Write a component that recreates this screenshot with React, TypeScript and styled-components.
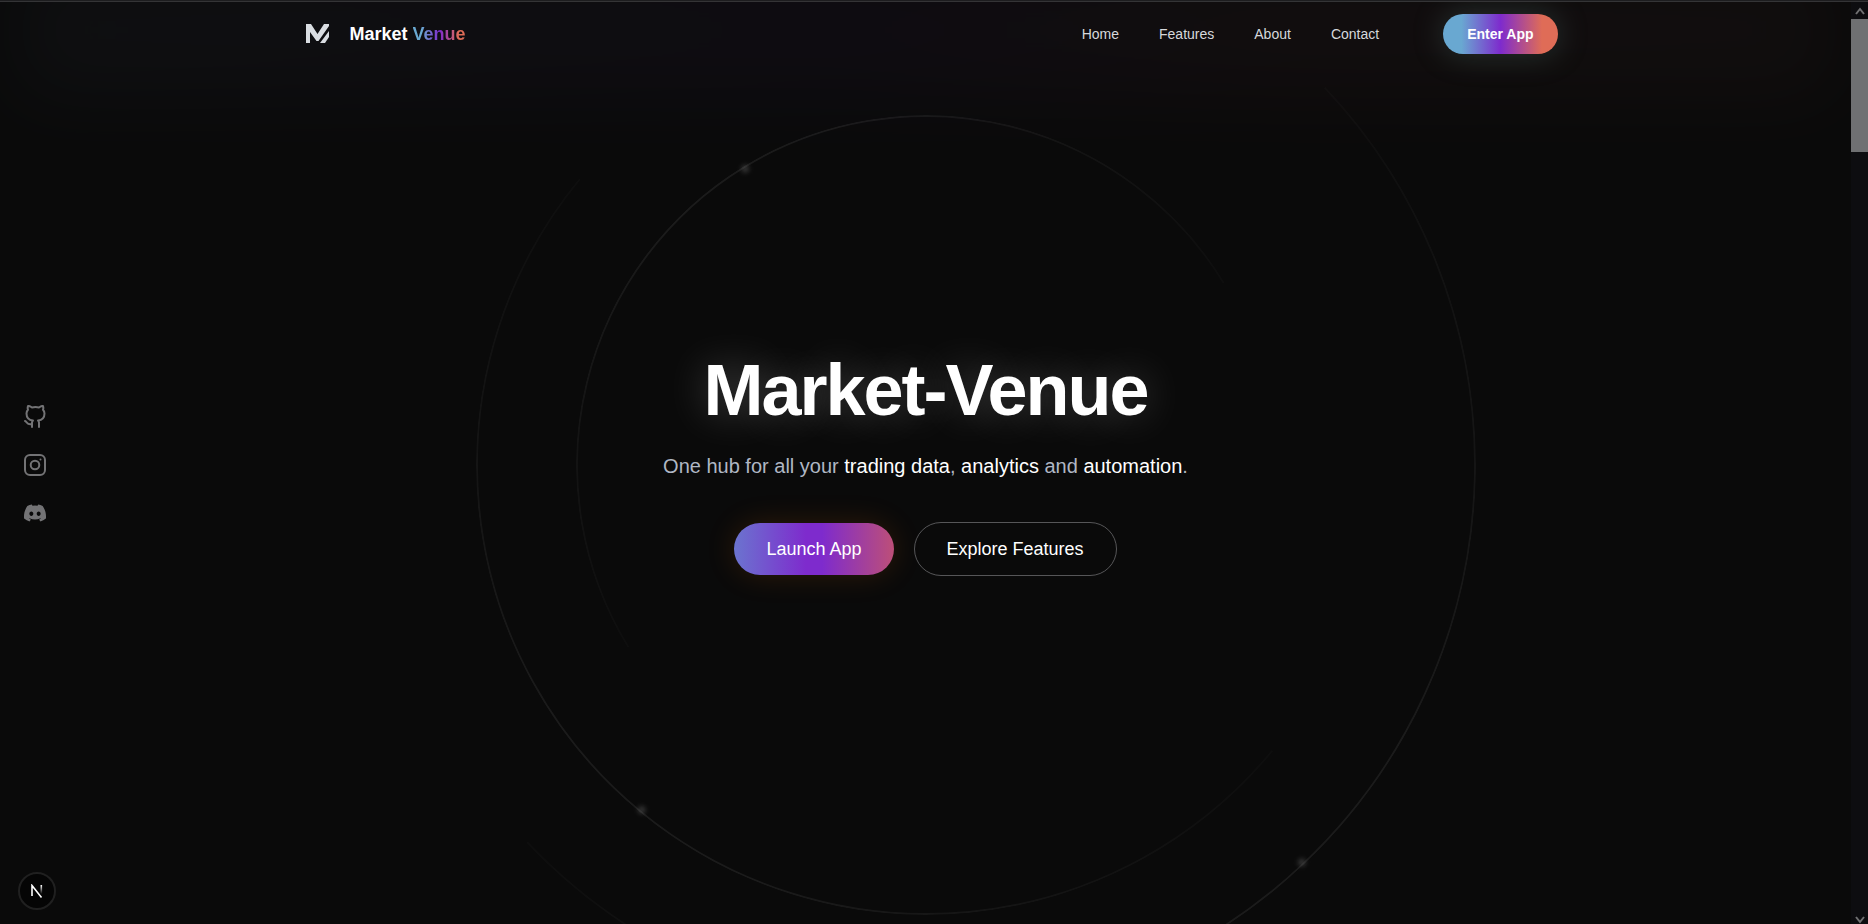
import React from 'react';
import styled, { createGlobalStyle } from 'styled-components';
import { FiGithub } from 'react-icons/fi';
import { FaDiscord } from 'react-icons/fa';

const brandGradient = 'linear-gradient(to right, #69a8d1 16%, #7e2bcd 50%, #df6c57 86%)';

const GlobalStyle = createGlobalStyle`
  * { box-sizing: border-box; }
  html { height: 100%; }
  body {
    margin: 0;
    min-height: 100%;
    background: #0a0a0a;
    color: #fff;
    font-family: "Liberation Sans", Arial, sans-serif;
    overflow: hidden;
  }
  a { color: inherit; text-decoration: none; }
  button { font-family: inherit; cursor: pointer; }
`;

const Page = styled.div`
  display: flex;
  height: 100vh;
  padding-top: 2px;
  background: linear-gradient(#1d1d1f 1px, #343436 1px 2px, #0a0a0a 2px);
`;

const Content = styled.div`
  position: relative;
  flex: 1;
  display: flex;
  flex-direction: column;
  overflow: hidden;
`;

const HeaderGlow = styled.div`
  position: absolute;
  inset: -40px 16px auto;
  height: 136px;
  background: linear-gradient(to right, #8090b8, #7e4bcd 45%, #c86478 70%, #b87070);
  filter: blur(40px);
  opacity: 0.04;
`;

const Header = styled.header`
  position: relative;
  z-index: 2;
  display: flex;
  align-items: center;
  justify-content: space-between;
  width: 100%;
  max-width: 1280px;
  height: 64px;
  margin: 0 auto;
  padding: 0 8px;
`;

const Brand = styled.a`
  display: flex;
  align-items: center;
  gap: 8px;
  font-size: 18px;
  line-height: 28px;
  font-weight: 700;
`;

const BrandAccent = styled.span`
  background: ${brandGradient};
  background-clip: text;
  -webkit-background-clip: text;
  color: transparent;
`;

const Nav = styled.nav`
  display: flex;
  align-items: center;
  gap: 40px;
  font-size: 14px;
  line-height: 20px;
  color: #d6d8dc;
`;

const EnterButton = styled.button`
  height: 40px;
  margin-left: 24px;
  padding: 0 24px;
  border: 0;
  border-radius: 20px;
  background: ${brandGradient};
  box-shadow: 0 0 32px #78aaa040;
  color: #fff;
  font-size: 14px;
  font-weight: 700;
`;

const Hero = styled.main`
  position: absolute;
  inset: 0 0 -4px;
  display: flex;
  flex-direction: column;
  align-items: center;
  justify-content: center;
  text-align: center;
`;

const Ring = styled.div<{ $radius: number; $turn: number }>`
  position: absolute;
  top: 50%;
  left: 50%;
  width: ${p => p.$radius * 2}px;
  height: ${p => p.$radius * 2}px;
  margin: -${p => p.$radius}px 0 0 -${p => p.$radius}px;
  transform: rotate(${p => p.$turn}deg);

  &::before {
    content: "";
    position: absolute;
    inset: 0;
    border: 2px solid #ffffff12;
    border-radius: 50%;
    mask-image: conic-gradient(from -90deg, #0004, #000 75deg 105deg, #0004 180deg, transparent 180deg);
  }

  &::after {
    content: "";
    position: absolute;
    top: -1px;
    left: calc(50% - 4px);
    width: 8px;
    height: 8px;
    border-radius: 50%;
    background: #ffffff28;
    filter: blur(2px);
  }
`;

const Title = styled.h1`
  position: relative;
  margin: 0;
  font-size: 72px;
  line-height: 72px;
  font-weight: 700;
  letter-spacing: -2px;
  text-shadow: 0 0 40px #ffffff40;
`;

const Tagline = styled.p`
  position: relative;
  margin: 24px 0 40px;
  font-size: 20px;
  line-height: 32px;
  color: #b0b7c4;

  strong { font-weight: 400; color: #fff; }
`;

const Actions = styled.div`
  position: relative;
  display: flex;
  align-items: center;
  gap: 20px;
`;

const LaunchButton = styled.button`
  height: 52px;
  padding: 0 32px;
  border: 0;
  border-radius: 26px;
  background: linear-gradient(to right, #6b74cf, #7e2bcd 45%, #7e2bcd 55%, #bd4f78);
  box-shadow: 0 0 30px #ff7a0026;
  color: #fff;
  font-size: 18px;
`;

const ExploreButton = styled.button`
  height: 54px;
  padding: 0 32px;
  border: 1px solid #565658;
  border-radius: 27px;
  background: transparent;
  color: #fff;
  font-size: 18px;
`;

const SocialLinks = styled.aside`
  position: absolute;
  inset: 0 auto -4px 23px;
  z-index: 2;
  display: flex;
  flex-direction: column;
  justify-content: center;
  gap: 24px;
  color: #737375;

  a, svg { display: block; }
`;

const DevBadge = styled.button`
  position: absolute;
  left: 18px;
  bottom: 14px;
  z-index: 2;
  display: grid;
  place-items: center;
  width: 38px;
  height: 38px;
  padding: 0;
  border: 2px solid #202020;
  border-radius: 50%;
  background: #050505;
`;

const Scrollbar = styled.div`
  display: flex;
  flex-direction: column;
  align-items: center;
  width: 17px;
  background: #0d0d10;
`;

const ScrollArrow = styled.span<{ $end?: boolean }>`
  display: grid;
  place-items: ${p => (p.$end ? 'end center' : 'center')};
  height: 17px;
`;

const Thumb = styled.div`
  width: 100%;
  height: 133px;
  margin-bottom: auto;
  background: #6f7072;
`;

const navItems = ['Home', 'Features', 'About', 'Contact'];

const rings = [
  { radius: 350, turn: -31.4 },
  { radius: 450, turn: 219.5 },
  { radius: 550, turn: 136.6 },
];

const BrandMark = () => (
  <svg width="48" height="48" viewBox="0 0 48 48" fill="#d9dde2" aria-hidden="true">
    <g transform="translate(12 14)">
      <path d="M0 0h5l6.500 10L18 0h5v2L12.500 17h-2L4 8V19H0z" />
      <path d="M23 7v6l-4 6h-5z" />
    </g>
  </svg>
);

const Instagram = () => (
  <svg width="24" height="24" viewBox="0 0 24 24" fill="none" stroke="currentColor" strokeWidth="2" aria-hidden="true">
    <rect x="2" y="2" width="20" height="20" rx="5" />
    <circle cx="12" cy="12" r="4.3" />
    <circle cx="17.5" cy="6.500" r="1" fill="currentColor" stroke="none" />
  </svg>
);

const Chevron = ({ down = false }: { down?: boolean }) => (
  <svg width="10" height="8" viewBox="0 0 10 8" fill="none" stroke="#707072" strokeWidth="2" aria-hidden="true">
    <path d={down ? 'M1 1l4 5 4-5' : 'M1 7l4-5 4 5'} />
  </svg>
);

export default function App() {
  return (
    <Page>
      <GlobalStyle />
      <Content>
        <HeaderGlow />
        <Header>
          <Brand href="#home">
            <BrandMark />
            <span>Market <BrandAccent>Venue</BrandAccent></span>
          </Brand>
          <Nav>
            {navItems.map(item => (
              <a key={item} href={`#${item.toLowerCase()}`}>{item}</a>
            ))}
            <EnterButton>Enter App</EnterButton>
          </Nav>
        </Header>

        <Hero>
          {rings.map(r => <Ring key={r.radius} $radius={r.radius} $turn={r.turn} />)}
          <Title>Market-Venue</Title>
          <Tagline>
            One hub for all your <strong>trading data</strong>, <strong>analytics</strong> and{' '}
            <strong>automation</strong>.
          </Tagline>
          <Actions>
            <LaunchButton>Launch App</LaunchButton>
            <ExploreButton>Explore Features</ExploreButton>
          </Actions>
        </Hero>

        <SocialLinks>
          <a href="#github" aria-label="GitHub"><FiGithub size={24} /></a>
          <a href="#instagram" aria-label="Instagram"><Instagram /></a>
          <a href="#discord" aria-label="Discord"><FaDiscord size={24} /></a>
        </SocialLinks>

        <DevBadge aria-label="Developer tools">
          <svg width="12" height="14" viewBox="0 0 12 14" fill="none" strokeWidth="1.6" aria-hidden="true">
            <defs>
              <linearGradient id="fade" x1="0" y1="0" x2="0" y2="1">
                <stop offset="0" stopColor="#fff" />
                <stop offset="1" stopColor="#fff" stopOpacity="0" />
              </linearGradient>
            </defs>
            <path d="M1 12V1.500l9.500 12" stroke="#fff" />
            <rect x="9.500" y="1" width="1.600" height="9" fill="url(#fade)" />
          </svg>
        </DevBadge>
      </Content>
      <Scrollbar aria-hidden="true">
        <ScrollArrow><Chevron /></ScrollArrow>
        <Thumb />
        <ScrollArrow $end><Chevron down /></ScrollArrow>
      </Scrollbar>
    </Page>
  );
}
